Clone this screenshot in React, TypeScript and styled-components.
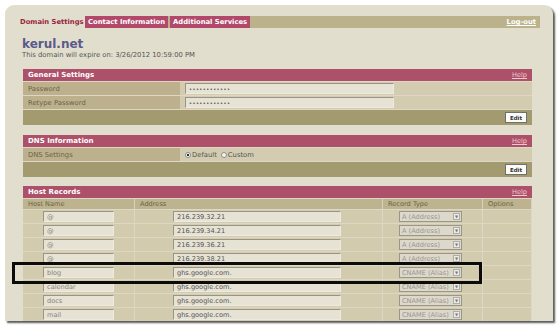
import React from 'react';
import styled, { createGlobalStyle } from 'styled-components';

const GlobalStyle = createGlobalStyle`
  *, *::before, *::after {
    box-sizing: border-box;
  }
  html, body {
    margin: 0;
    padding: 0;
    background: #ffffff;
  }
  body {
    font-family: 'DejaVu Sans', Verdana, sans-serif;
  }
`;

const Frame = styled.div`
  position: relative;
  width: 559px;
  height: 326px;
  padding: 5px 0 0 5px;
  overflow: hidden;
`;

const Card = styled.div`
  width: 548px;
  height: 316px;
  padding: 11px 13px 0 14px;
  background: #e2decd;
  border-radius: 9px 9px 0 0;
  box-shadow: 2px 2px 2px rgba(0, 0, 0, 0.65);
  overflow: hidden;
`;

const TabRow = styled.div`
  display: flex;
  height: 12px;
  font-size: 6.8px;
  font-weight: bold;
  line-height: 12px;
`;

const ActiveTab = styled.div`
  width: 66px;
  padding-left: 1px;
  color: #9a2444;
`;

const TabBar = styled.div`
  flex: 1;
  display: flex;
  background: #bbb28b;
`;

const Tab = styled.div`
  margin-left: ${(p: { first?: boolean }) => (p.first ? '0' : '2px')};
  padding: 0 3px;
  background: #b2486a;
  color: #ffffff;
  white-space: nowrap;
`;

const LogOut = styled.a`
  margin-left: auto;
  padding-right: 4px;
  color: #ffffff;
  text-decoration: underline;
`;

const Heading = styled.div`
  margin: 9px 0 0 3px;
`;

const DomainName = styled.div`
  font-size: 12px;
  font-weight: bold;
  line-height: 14px;
  color: #5a5a8c;
`;

const Expire = styled.div`
  font-size: 6.8px;
  line-height: 8px;
  color: #555555;
`;

const Panel = styled.div<{ gap: number }>`
  width: 509px;
  margin: ${(p) => p.gap}px 0 0 4px;
`;

const PanelHeader = styled.div`
  display: flex;
  align-items: center;
  height: 12px;
  padding: 0 5px;
  background: #ad5069;
  color: #ffffff;
  font-size: 7px;
  font-weight: bold;
`;

const Help = styled.a`
  margin-left: auto;
  font-size: 6.6px;
  font-weight: normal;
  color: #f2c6d0;
  text-decoration: underline;
`;

const FormRow = styled.div`
  display: grid;
  grid-template-columns: 157px 1fr;
  height: 14px;
  border-top: 1px solid #ddd7c3;
`;

const Label = styled.div`
  display: flex;
  align-items: center;
  padding-left: 5px;
  background: #bcb18c;
  font-size: 6.8px;
  color: #6b6244;
`;

const Value = styled.div`
  display: flex;
  align-items: center;
  gap: 3px;
  padding-left: 5px;
  background: #d4ccb1;
  font-size: 6.8px;
  color: #555;
`;

const TextBox = styled.div<{ w: number }>`
  width: ${(p) => p.w}px;
  height: 11px;
  padding-left: 3px;
  display: flex;
  align-items: center;
  background: #e6e2d4;
  border: 1px solid #eeeae0;
  border-top-color: #999488;
  border-left-color: #999488;
  font-size: 6.6px;
  color: ${(p) => (p.color ? p.color : '#8a8578')};
  white-space: nowrap;
  overflow: hidden;
`;

const Dots = styled.span`
  font-size: 5px;
  letter-spacing: 0.5px;
  color: #333;
`;

const EditBar = styled.div`
  display: flex;
  align-items: center;
  justify-content: flex-end;
  height: 16px;
  padding-right: 5px;
  border-top: 1px solid #ddd7c3;
  background: #a39a6f;
`;

const EditButton = styled.button`
  width: 22px;
  height: 11px;
  padding: 0;
  background: #fbfbf8;
  border: 1px solid #6f6f6f;
  font-family: 'DejaVu Sans', Verdana, sans-serif;
  font-size: 5.5px;
  font-weight: bold;
  color: #333;
`;

const Radio = styled.span<{ on?: boolean }>`
  display: inline-block;
  width: 6px;
  height: 6px;
  margin-right: 1px;
  border-radius: 50%;
  border: 1px solid #8c8c8c;
  background: ${(p) => (p.on ? 'radial-gradient(circle, #333 0 1.2px, #f4f4f4 1.5px)' : '#f4f4f4')};
`;

const RadioLabel = styled.span`
  display: inline-flex;
  align-items: center;
  margin-right: 1px;
`;

const HostGrid = styled.div`
  display: grid;
  grid-template-columns: 112px 248px 100px 1fr;
`;

const ColHead = styled.div`
  height: 11px;
  padding-left: 5px;
  line-height: 10px;
  background: #bdb38f;
  border-top: 1px solid #ddd7c3;
  border-right: 1px solid #d8d2bd;
  font-size: 6.6px;
  color: #6b6244;
`;

const Cell = styled.div<{ pad: number }>`
  display: flex;
  align-items: center;
  height: 14px;
  padding-left: ${(p) => p.pad}px;
  background: #d3cbae;
  border-top: 1px solid #ddd7c3;
  border-right: 1px solid #ddd7c3;
`;

const Select = styled.div`
  position: relative;
  width: 63px;
  height: 11px;
  padding-left: 2px;
  display: flex;
  align-items: center;
  background: #dcd8cc;
  border: 1px solid #9a968a;
  font-size: 6.6px;
  color: #9a968c;
`;

const SelectArrow = styled.span`
  position: absolute;
  right: 1px;
  top: 1px;
  width: 7px;
  height: 7px;
  background: #ecebe6;
  border: 1px solid #b0ada4;
  font-size: 4px;
  line-height: 5px;
  text-align: center;
  color: #777;
`;

const Highlight = styled.div`
  position: absolute;
  left: 12px;
  top: 262px;
  width: 470px;
  height: 22px;
  border: 3px solid #0b0b0b;
`;

const hosts = [
  { name: '@', address: '216.239.32.21', type: 'A (Address)' },
  { name: '@', address: '216.239.34.21', type: 'A (Address)' },
  { name: '@', address: '216.239.36.21', type: 'A (Address)' },
  { name: '@', address: '216.239.38.21', type: 'A (Address)' },
  { name: 'blog', address: 'ghs.google.com.', type: 'CNAME (Alias)' },
  { name: 'calendar', address: 'ghs.google.com.', type: 'CNAME (Alias)' },
  { name: 'docs', address: 'ghs.google.com.', type: 'CNAME (Alias)' },
  { name: 'mail', address: 'ghs.google.com.', type: 'CNAME (Alias)' },
];

const App: React.FC = () => {
  return (
    <Frame>
      <GlobalStyle />
      <Card>
        <TabRow>
          <ActiveTab>Domain Settings</ActiveTab>
          <TabBar>
            <Tab first>Contact Information</Tab>
            <Tab>Additional Services</Tab>
            <LogOut>Log-out</LogOut>
          </TabBar>
        </TabRow>

        <Heading>
          <DomainName>kerul.net</DomainName>
          <Expire>This domain will expire on: 3/26/2012 10:59:00 PM</Expire>
        </Heading>

        <Panel gap={10}>
          <PanelHeader>
            General Settings
            <Help>Help</Help>
          </PanelHeader>
          <FormRow>
            <Label>Password</Label>
            <Value>
              <TextBox w={209}>
                <Dots>••••••••••••</Dots>
              </TextBox>
            </Value>
          </FormRow>
          <FormRow>
            <Label>Retype Password</Label>
            <Value>
              <TextBox w={209}>
                <Dots>••••••••••••</Dots>
              </TextBox>
            </Value>
          </FormRow>
          <EditBar>
            <EditButton>Edit</EditButton>
          </EditBar>
        </Panel>

        <Panel gap={10}>
          <PanelHeader>
            DNS Information
            <Help>Help</Help>
          </PanelHeader>
          <FormRow>
            <Label>DNS Settings</Label>
            <Value>
              <RadioLabel>
                <Radio on />
                Default
              </RadioLabel>
              <RadioLabel>
                <Radio />
                Custom
              </RadioLabel>
            </Value>
          </FormRow>
          <EditBar>
            <EditButton>Edit</EditButton>
          </EditBar>
        </Panel>

        <Panel gap={9}>
          <PanelHeader>
            Host Records
            <Help>Help</Help>
          </PanelHeader>
          <HostGrid>
            <ColHead>Host Name</ColHead>
            <ColHead>Address</ColHead>
            <ColHead>Record Type</ColHead>
            <ColHead>Options</ColHead>
            {hosts.map((h, i) => (
              <React.Fragment key={i}>
                <Cell pad={20}>
                  <TextBox w={71}>{h.name}</TextBox>
                </Cell>
                <Cell pad={38}>
                  <TextBox w={168} color="#555">
                    {h.address}
                  </TextBox>
                </Cell>
                <Cell pad={16}>
                  <Select>
                    {h.type}
                    <SelectArrow>▼</SelectArrow>
                  </Select>
                </Cell>
                <Cell pad={0} />
              </React.Fragment>
            ))}
          </HostGrid>
        </Panel>
      </Card>
      <Highlight />
    </Frame>
  );
};

export default App;
